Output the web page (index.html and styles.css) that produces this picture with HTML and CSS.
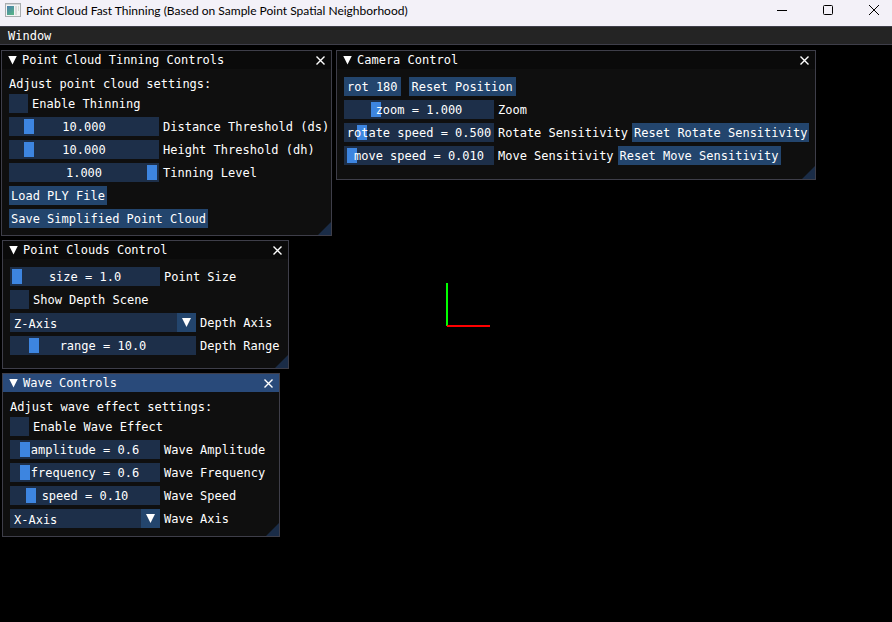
FILE: index.html
```html
<!DOCTYPE html>
<html lang="en">
<head>
<meta charset="utf-8">
<title>Point Cloud Fast Thinning</title>
<link rel="stylesheet" href="styles.css">
</head>
<body>
<header class="titlebar">
  <svg class="app-icon" width="16" height="14" viewBox="0 0 16 14" aria-hidden="true">
    <defs>
      <linearGradient id="pane" x1="0" y1="0" x2="0.6" y2="1">
        <stop offset="0" stop-color="#4a7fae"/>
        <stop offset="1" stop-color="#57b08a"/>
      </linearGradient>
    </defs>
    <rect x="0.5" y="0.5" width="15" height="13" fill="#f4f4f4" stroke="#a9adb0"/>
    <rect x="1" y="1" width="14" height="1" fill="#d4d8da"/>
    <rect x="2" y="3" width="7" height="9" fill="url(#pane)"/>
    <rect x="10" y="3" width="2" height="9" fill="#dcdcdc"/>
    <rect x="13" y="3" width="1" height="5" fill="#d2dcd2"/>
  </svg>
  <h1 class="app-title">Point Cloud Fast Thinning (Based on Sample Point Spatial Neighborhood)</h1>
  <div class="window-buttons">
    <button type="button" class="window-button" aria-label="Minimize">
      <svg width="12" height="12" viewBox="0 0 12 12"><path d="M1 6.5H11" stroke="#000" fill="none"/></svg>
    </button>
    <button type="button" class="window-button" aria-label="Maximize">
      <svg width="12" height="12" viewBox="0 0 12 12"><rect x="1.5" y="1.5" width="9" height="9" rx="1" stroke="#000" fill="none"/></svg>
    </button>
    <button type="button" class="window-button" aria-label="Close">
      <svg width="12" height="12" viewBox="0 0 12 12"><path d="M1 1L11 11M11 1L1 11" stroke="#000" fill="none"/></svg>
    </button>
  </div>
</header>

<main class="client">
  <nav class="menubar"><button type="button" class="menu-item">Window</button></nav>

  <svg class="axes" width="46" height="46" viewBox="0 0 46 46" aria-hidden="true">
    <path d="M1 0V43" stroke="#0f0" stroke-width="2"/>
    <path d="M1 43H44" stroke="#f00" stroke-width="2"/>
  </svg>

  <section class="panel panel-thinning">
    <div class="panel-head">
      <button type="button" class="collapse" aria-label="Collapse"></button>
      <h2 class="panel-title">Point Cloud Tinning Controls</h2>
      <button type="button" class="close" aria-label="Close"><svg width="9" height="9" viewBox="0 0 9 9"><path d="M0.5 0.5L8.5 8.5M8.5 0.5L0.5 8.5"/></svg></button>
    </div>
    <div class="panel-body">
      <p class="note">Adjust point cloud settings:</p>
      <div class="row"><input type="checkbox" class="check" id="enable-thin"><label for="enable-thin">Enable Thinning</label></div>
      <div class="row"><span class="slider"><input type="range" id="ds" min="0" max="1000" value="96"><output for="ds">10.000</output></span><label for="ds">Distance Threshold (ds)</label></div>
      <div class="row"><span class="slider"><input type="range" id="dh" min="0" max="1000" value="96"><output for="dh">10.000</output></span><label for="dh">Height Threshold (dh)</label></div>
      <div class="row"><span class="slider"><input type="range" id="level" min="0" max="100" value="100"><output for="level">1.000</output></span><label for="level">Tinning Level</label></div>
      <div class="row"><button type="button" class="btn">Load PLY File</button></div>
      <div class="row"><button type="button" class="btn">Save Simplified Point Cloud</button></div>
    </div>
  </section>

  <section class="panel panel-camera">
    <div class="panel-head">
      <button type="button" class="collapse" aria-label="Collapse"></button>
      <h2 class="panel-title">Camera Control</h2>
      <button type="button" class="close" aria-label="Close"><svg width="9" height="9" viewBox="0 0 9 9"><path d="M0.5 0.5L8.5 8.5M8.5 0.5L0.5 8.5"/></svg></button>
    </div>
    <div class="panel-body">
      <div class="row row-wide"><button type="button" class="btn">rot 180</button><button type="button" class="btn">Reset Position</button></div>
      <div class="row"><span class="slider"><input type="range" id="zoom" min="0" max="1000" value="184"><output for="zoom">zoom = 1.000</output></span><label for="zoom">Zoom</label></div>
      <div class="row">
        <span class="slider"><input type="range" id="rotate" min="0" max="1000" value="80"><output for="rotate">rotate speed = 0.500</output></span><label for="rotate">Rotate Sensitivity</label>
        <button type="button" class="btn">Reset Rotate Sensitivity</button>
      </div>
      <div class="row">
        <span class="slider"><input type="range" id="move" min="0" max="1000" value="8"><output for="move">move speed = 0.010</output></span><label for="move">Move Sensitivity</label>
        <button type="button" class="btn">Reset Move Sensitivity</button>
      </div>
    </div>
  </section>

  <section class="panel panel-clouds">
    <div class="panel-head">
      <button type="button" class="collapse" aria-label="Collapse"></button>
      <h2 class="panel-title">Point Clouds Control</h2>
      <button type="button" class="close" aria-label="Close"><svg width="9" height="9" viewBox="0 0 9 9"><path d="M0.5 0.5L8.5 8.5M8.5 0.5L0.5 8.5"/></svg></button>
    </div>
    <div class="panel-body">
      <div class="row"><span class="slider"><input type="range" id="size" min="0" max="100" value="0"><output for="size">size = 1.0</output></span><label for="size">Point Size</label></div>
      <div class="row"><input type="checkbox" class="check" id="depth-scene"><label for="depth-scene">Show Depth Scene</label></div>
      <div class="row"><span class="combo combo-long"><select id="depth-axis"><option>X-Axis</option><option>Y-Axis</option><option selected>Z-Axis</option></select></span><label for="depth-axis">Depth Axis</label></div>
      <div class="row"><span class="slider slider-long"><input type="range" id="range" min="0" max="100" value="10"><output for="range">range = 10.0</output></span><label for="range">Depth Range</label></div>
    </div>
  </section>

  <section class="panel panel-wave is-active">
    <div class="panel-head">
      <button type="button" class="collapse" aria-label="Collapse"></button>
      <h2 class="panel-title">Wave Controls</h2>
      <button type="button" class="close" aria-label="Close"><svg width="9" height="9" viewBox="0 0 9 9"><path d="M0.5 0.5L8.5 8.5M8.5 0.5L0.5 8.5"/></svg></button>
    </div>
    <div class="panel-body">
      <p class="note">Adjust wave effect settings:</p>
      <div class="row"><input type="checkbox" class="check" id="enable-wave"><label for="enable-wave">Enable Wave Effect</label></div>
      <div class="row"><span class="slider"><input type="range" id="amp" min="0" max="100" value="6"><output for="amp">amplitude = 0.6</output></span><label for="amp">Wave Amplitude</label></div>
      <div class="row"><span class="slider"><input type="range" id="freq" min="0" max="100" value="6"><output for="freq">frequency = 0.6</output></span><label for="freq">Wave Frequency</label></div>
      <div class="row"><span class="slider"><input type="range" id="speed" min="0" max="100" value="10"><output for="speed">speed = 0.10</output></span><label for="speed">Wave Speed</label></div>
      <div class="row"><span class="combo"><select id="wave-axis"><option selected>X-Axis</option><option>Y-Axis</option><option>Z-Axis</option></select></span><label for="wave-axis">Wave Axis</label></div>
    </div>
  </section>
</main>
</body>
</html>
```
FILE: styles.css
```css
:root {
  --border: #3e3e49;
  --frame: #1d2f49;
  --button: #23456d;
  --grab: #3d85e0;
  --mono: "DejaVu Sans Mono", "Liberation Mono", monospace;
}

* { box-sizing: border-box; }

html, body { height: 100%; }

body {
  margin: 0;
  display: flex;
  flex-direction: column;
  background: #000;
  color: #fff;
  font: 12px/21px var(--mono);
  overflow: hidden;
}

button, input, select { font: inherit; color: inherit; margin: 0; }
h1, h2, p { margin: 0; font-size: inherit; font-weight: normal; }
svg { display: block; }

/* OS title bar */
.titlebar {
  display: flex;
  align-items: center;
  height: 26px;
  padding: 0 5px;
  gap: 5px;
  background: #f3f1f8;
  color: #000;
}
.app-icon { flex: none; margin-bottom: 6px; }
.app-title {
  flex: 1;
  height: 22px;
  margin-bottom: 4px;
  font: 12px/22px Lato, "Open Sans", sans-serif;
  white-space: nowrap;
}
.window-buttons { display: flex; gap: 22px; align-self: flex-start; padding: 4px 1px 0 0; }
.window-button {
  width: 24px;
  height: 12px;
  padding: 0 6px;
  border: 0;
  background: none;
}

/* Render surface */
.client { position: relative; flex: 1; }
.menubar {
  display: flex;
  height: 19px;
  padding: 0 8px;
  background: #242424;
  border: solid var(--border);
  border-width: 1px 0;
}
.menu-item { height: 17px; padding: 1px 0 0; border: 0; background: none; line-height: 17px; }

.axes { position: absolute; left: 50%; top: 50%; margin-top: -41px; }

/* Floating tool windows */
.panel {
  position: absolute;
  background: #0f0f0f;
  border: 1px solid var(--border);
}
.panel::after {
  content: "";
  position: absolute;
  right: 0;
  bottom: 0;
  width: 13px;
  height: 13px;
  background: #1a2c47;
  clip-path: polygon(100% 0, 100% 100%, 0 100%);
}
.panel-thinning { left: 1px; top: 24px; width: 331px; }
.panel-camera { left: 336px; top: 24px; width: 480px; }
.panel-clouds { left: 2px; top: 214px; width: 287px; }
.panel-wave { left: 2px; top: 347px; width: 278px; }

.panel-head {
  display: flex;
  align-items: center;
  height: 18px;
  padding: 0 6px 0 6px;
  gap: 5px;
  background: #0a0a0a;
}
.is-active .panel-head { background: #294a7a; }
.panel-title { flex: 1; line-height: 18px; white-space: nowrap; }
.collapse {
  width: 9px;
  height: 9px;
  padding: 0;
  border: 0;
  background: #fff;
  clip-path: polygon(0 0, 100% 0, 50% 100%);
}
.close { padding: 0; border: 0; background: none; }
.close path { stroke: #fff; stroke-width: 1.4; fill: none; }

.panel-body {
  display: flex;
  flex-direction: column;
  gap: 4px;
  padding: 8px 7px 7px;
}
.panel-camera .panel-body { padding-bottom: 14px; }
.panel-clouds .panel-body { padding-bottom: 13px; }
.panel-wave .panel-body { padding-bottom: 8px; }

.note { height: 13px; line-height: 15px; }
.row { display: flex; gap: 4px; height: 19px; white-space: nowrap; }
.row-wide { gap: 8px; }

.btn {
  height: 19px;
  padding: 1px 2px 0;
  border: 0;
  background: var(--button);
  line-height: 18px;
  white-space: nowrap;
}
.row-wide .btn { padding: 1px 3px 0; }

.check {
  appearance: none;
  width: 19px;
  height: 19px;
  background: var(--frame);
}
.check:checked { box-shadow: inset 0 0 0 4px var(--frame); background: var(--grab); }

.slider { display: grid; flex: none; width: 150px; height: 19px; }
.slider > * { grid-area: 1 / 1; }
.slider input {
  appearance: none;
  width: 100%;
  height: 19px;
  padding: 2px;
  background: var(--frame);
}
.slider input::-webkit-slider-thumb {
  appearance: none;
  width: 10px;
  height: 15px;
  background: var(--grab);
}
.slider output { z-index: 1; text-align: center; pointer-events: none; }

.combo { position: relative; flex: none; width: 150px; height: 19px; }
.slider-long, .combo-long { width: 186px; }
.combo select {
  appearance: none;
  width: 100%;
  height: 19px;
  padding: 1px 23px 0 4px;
  border: 0;
  border-radius: 0;
  background: linear-gradient(var(--button), var(--button)) right / 19px 100% no-repeat var(--frame);
}
.combo::after {
  content: "";
  position: absolute;
  right: 5px;
  top: 5px;
  width: 9px;
  height: 9px;
  background: #fff;
  clip-path: polygon(0 0, 100% 0, 50% 100%);
  pointer-events: none;
}
```
